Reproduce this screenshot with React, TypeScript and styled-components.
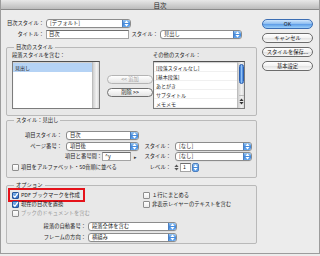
import styled, { createGlobalStyle } from 'styled-components'

const GlobalStyle = createGlobalStyle`
  html, body { margin: 0; padding: 0; background: #ececec; }
  body {
    font-family: "Noto Sans CJK JP", "Noto Sans", sans-serif;
    font-size: 5.3px;
    color: #1c1c1c;
  }
  * { box-sizing: border-box; }
`

const Arrows = ({ color = '#fff' }: { color?: string }) => (
    <svg width="5" height="7" viewBox="0 0 5 7">
        <polygon points="2.5,0.4 4.6,2.9 0.4,2.9" fill={color} />
        <polygon points="0.4,4.1 4.6,4.1 2.5,6.6" fill={color} />
    </svg>
)

const CheckMark = () => (
    <svg width="7" height="7" viewBox="0 0 7 7">
        <path d="M1.3 3.6 L2.9 5.3 L5.9 1.2" stroke="#fff" strokeWidth="1.3" fill="none" />
    </svg>
)

const Popup = ({ value, width }: { value: string; width: number }) => (
    <Select $w={width}>
        <SelectText>{value}</SelectText>
        <ArrowBox>
            <Arrows />
        </ArrowBox>
    </Select>
)

const Check = ({ label, on, disabled }: { label: string; on?: boolean; disabled?: boolean }) => (
    <CheckRow $disabled={disabled}>
        <Box $on={on}>{on && <CheckMark />}</Box>
        <span>{label}</span>
    </CheckRow>
)

const otherStyles = ['[段落スタイルなし]', '[基本段落]', 'あとがき', 'サブタイトル', 'メモメモ']

const App = () => {
    return (
        <>
            <GlobalStyle />
            <Dialog>
                <TitleBar>目次</TitleBar>
                <Body>
                    <LeftCol>
                        <Row $mb={2}>
                            <Label $w={39}>目次スタイル：</Label>
                            <Popup value="[デフォルト]" width={85} />
                        </Row>
                        <Row>
                            <Label $w={39}>タイトル：</Label>
                            <Field $w={83}>目次</Field>
                            <Label $w={30}>スタイル：</Label>
                            <Popup value="見出し" width={82} />
                        </Row>

                        <Group $mt={5} $pb={6}>
                            <Legend>目次のスタイル</Legend>
                            <StyleColumns>
                                <ListCol $w={88}>
                                    <SmallLabel>段落スタイルを含む：</SmallLabel>
                                    <List>
                                        <Items>
                                            <Item $selected>見出し</Item>
                                        </Items>
                                        <Track />
                                    </List>
                                </ListCol>
                                <MoveButtons>
                                    <Pill $disabled>&lt;&lt; 追加</Pill>
                                    <Pill>削除 &gt;&gt;</Pill>
                                </MoveButtons>
                                <ListCol $w={92}>
                                    <SmallLabel>その他のスタイル：</SmallLabel>
                                    <List>
                                        <Items>
                                            {otherStyles.map((s) => (
                                                <Item key={s}>{s}</Item>
                                            ))}
                                        </Items>
                                        <Track>
                                            <Thumb />
                                            <TrackArrows>
                                                <Arrows color="#333" />
                                            </TrackArrows>
                                        </Track>
                                    </List>
                                </ListCol>
                            </StyleColumns>
                        </Group>

                        <Group $mt={1} $pb={5}>
                            <Legend>スタイル：見出し</Legend>
                            <EntryGrid>
                                <Label>項目スタイル：</Label>
                                <Popup value="目次" width={73} />
                                <span />
                                <span />

                                <Label>ページ番号：</Label>
                                <Popup value="項目後" width={73} />
                                <Label>スタイル：</Label>
                                <Popup value="[なし]" width={77} />

                                <span />
                                <Inline>
                                    <Label $w={36} $left>項目と番号間：</Label>
                                    <Field $w={29}>^y</Field>
                                    <Caret>▸</Caret>
                                </Inline>
                                <Label>スタイル：</Label>
                                <Popup value="[なし]" width={77} />

                                <Span2>
                                    <Check label="項目をアルファベット・50音順に並べる" />
                                </Span2>
                                <Label>レベル：</Label>
                                <Inline>
                                    <Stepper>
                                        <Arrows color="#555" />
                                    </Stepper>
                                    <Field $w={11}>1</Field>
                                    <ArrowBox $solo>
                                        <Arrows />
                                    </ArrowBox>
                                </Inline>
                            </EntryGrid>
                        </Group>

                        <Group $mt={4} $pb={1}>
                            <Legend>オプション</Legend>
                            <OptionGrid>
                                <Marked>
                                    <Check label="PDF ブックマークを作成" on />
                                </Marked>
                                <Check label="１行にまとめる" />
                                <Check label="現在の目次を置換" on />
                                <Check label="非表示レイヤーのテキストを含む" />
                                <Check label="ブックのドキュメントを含む" disabled />
                            </OptionGrid>
                            <Row $mt={4}>
                                <Label $w={75}>段落の自動番号：</Label>
                                <Popup value="段落全体を含む" width={89} />
                            </Row>
                            <Row $mt={2}>
                                <Label $w={75}>フレームの方向：</Label>
                                <Popup value="横組み" width={89} />
                            </Row>
                        </Group>
                    </LeftCol>

                    <ButtonCol>
                        <Button $primary>OK</Button>
                        <Button>キャンセル</Button>
                        <Button>スタイルを保存...</Button>
                        <Button>基本設定</Button>
                    </ButtonCol>
                </Body>
            </Dialog>
        </>
    )
}

export default App

const Dialog = styled.div`
    width: 320px;
    height: 254px;
    background: #ececec;
    border: 1px solid #9c9c9c;
    border-top: none;
    overflow: hidden;
`
const TitleBar = styled.div`
    height: 10px;
    display: flex;
    align-items: center;
    justify-content: center;
    font-size: 6.5px;
    background: linear-gradient(#e8e8e8, #bcbcbc);
    border-bottom: 1px solid #8a8a8a;
`
const Body = styled.div`
    display: flex;
    gap: 5px;
    padding: 9px 0 0 5px;
`
const LeftCol = styled.div`
    width: 251px;
    display: flex;
    flex-direction: column;
`
const Row = styled.div<{ $mb?: number; $mt?: number }>`
    display: flex;
    align-items: center;
    height: 9px;
    margin-bottom: ${(p) => p.$mb ?? 0}px;
    margin-top: ${(p) => p.$mt ?? 0}px;
`
const Label = styled.span<{ $w?: number; $left?: boolean }>`
    ${(p) => (p.$w ? `width: ${p.$w}px; flex: none;` : '')}
    text-align: ${(p) => (p.$left ? 'left' : 'right')};
    white-space: nowrap;
    line-height: 9px;
    padding-right: 1px;
`
const SmallLabel = styled.div`
    line-height: 7px;
    margin-top: 1px;
    white-space: nowrap;
`
const Select = styled.div<{ $w: number }>`
    width: ${(p) => p.$w}px;
    height: 9px;
    flex: none;
    display: flex;
    align-items: stretch;
    margin-left: 1px;
    background: #fff;
    border: 1px solid #8c8c8c;
    border-radius: 3px;
    box-shadow: 0 0.5px 0 #d4d4d4;
    overflow: hidden;
`
const SelectText = styled.span`
    flex: 1;
    padding-left: 3px;
    line-height: 7px;
    white-space: nowrap;
`
const ArrowBox = styled.span<{ $solo?: boolean }>`
    width: ${(p) => (p.$solo ? 7 : 8)}px;
    height: ${(p) => (p.$solo ? '9px' : 'auto')};
    display: flex;
    align-items: center;
    justify-content: center;
    background: linear-gradient(#9cc8f2, #3d86dc 55%, #6aaaf0);
    border-left: 1px solid #4d7fbf;
    ${(p) => (p.$solo ? 'border: 1px solid #4d7fbf; border-radius: 2px; margin-left: 1px;' : '')}
`
const Field = styled.div<{ $w: number }>`
    width: ${(p) => p.$w}px;
    height: 9px;
    flex: none;
    margin-left: 1px;
    padding-left: 2px;
    line-height: 7px;
    background: #fff;
    border: 1px solid #a4a4a4;
    border-top-color: #6e6e6e;
`
const Group = styled.fieldset<{ $mt: number; $pb: number }>`
    margin: ${(p) => p.$mt}px 0 0 0;
    padding: 0 5px ${(p) => p.$pb}px;
    min-width: 0;
    border: 1px solid #b9b9b9;
    border-radius: 2px;
    background: #e8e8e8;
`
const Legend = styled.legend`
    padding: 0 2px;
    margin-left: 2px;
    line-height: 7px;
`
const StyleColumns = styled.div`
    display: flex;
    align-items: flex-start;
`
const ListCol = styled.div<{ $w: number }>`
    width: ${(p) => p.$w}px;
    display: flex;
    flex-direction: column;
    gap: 2px;
    & + & {
        margin-left: 5px;
    }
`
const List = styled.div`
    height: 48px;
    display: flex;
    background: #fff;
    border: 1px solid #7c7c7c;
    border-top-color: #505050;
    box-shadow: inset 0 1px 1px rgba(0, 0, 0, 0.2);
`
const Items = styled.div`
    flex: 1;
    display: flex;
    flex-direction: column;
    padding-top: 1px;
`
const Item = styled.div<{ $selected?: boolean }>`
    height: 9px;
    line-height: 9px;
    padding-left: 2px;
    font-size: 5px;
    white-space: nowrap;
    background: ${(p) => (p.$selected ? '#b5d3f5' : 'transparent')};
    border-bottom: 1px solid ${(p) => (p.$selected ? '#b5d3f5' : '#f0f0f0')};
`
const Track = styled.div`
    width: 7px;
    display: flex;
    flex-direction: column;
    align-items: center;
    padding: 2px 0 1px;
    background: linear-gradient(90deg, #cfcfcf, #f2f2f2 60%, #d8d8d8);
    border-left: 1px solid #bdbdbd;
`
const Thumb = styled.div`
    width: 5px;
    height: 20px;
    border-radius: 3px;
    background: linear-gradient(90deg, #2f6fce, #8fc1f4 50%, #3a7ad6);
    border: 1px solid #2a5fb0;
`
const TrackArrows = styled.div`
    margin-top: auto;
    height: 12px;
    display: flex;
    align-items: center;
    border-top: 1px solid #bbb;
`
const MoveButtons = styled.div`
    width: 46px;
    margin-left: 7px;
    padding-top: 24px;
    display: flex;
    flex-direction: column;
    gap: 4px;
`
const Pill = styled.div<{ $disabled?: boolean }>`
    height: 9px;
    border-radius: 5px;
    border: 1px solid ${(p) => (p.$disabled ? '#b4b4b4' : '#707070')};
    background: linear-gradient(#ffffff, #e4e4e4);
    color: ${(p) => (p.$disabled ? '#a4a4a4' : '#1c1c1c')};
    text-align: center;
    line-height: 7px;
`
const EntryGrid = styled.div`
    margin-top: 7px;
    display: grid;
    grid-template-columns: 51px 73px 32px 77px;
    grid-auto-rows: 9px;
    column-gap: 2px;
    row-gap: 1.5px;
    align-items: center;
`
const Inline = styled.div`
    display: flex;
    align-items: center;
`
const Caret = styled.span`
    margin-left: 3px;
    font-size: 5px;
    color: #333;
`
const Stepper = styled.span`
    width: 5px;
    height: 9px;
    display: flex;
    align-items: center;
`
const Span2 = styled.div`
    grid-column: 1 / 3;
`
const CheckRow = styled.div<{ $disabled?: boolean }>`
    display: flex;
    align-items: center;
    gap: 2px;
    height: 9px;
    white-space: nowrap;
    color: ${(p) => (p.$disabled ? '#9a9a9a' : '#1c1c1c')};
`
const Box = styled.span<{ $on?: boolean }>`
    width: 7px;
    height: 7px;
    flex: none;
    display: flex;
    border-radius: 1px;
    border: 1px solid ${(p) => (p.$on ? '#28569a' : '#8e8e8e')};
    background: ${(p) => (p.$on ? 'linear-gradient(#7fb4ee, #2f6fc8)' : 'linear-gradient(#ffffff, #ececec)')};
    align-items: center;
    justify-content: center;
    svg {
        margin: -1px;
    }
`
const OptionGrid = styled.div`
    margin-top: 2px;
    display: grid;
    grid-template-columns: 131px 1fr;
    grid-auto-rows: 9px;
`
const Marked = styled.div`
    justify-self: start;
    outline: 2px solid #e5121a;
    outline-offset: 0;
    margin: -1px 0 0 -2px;
    padding: 1px 3px 0 2px;
    height: 10px;
`
const ButtonCol = styled.div`
    width: 51px;
    display: flex;
    flex-direction: column;
    gap: 4px;
`
const Button = styled.div<{ $primary?: boolean }>`
    height: 10px;
    border-radius: 5px;
    text-align: center;
    line-height: 8px;
    white-space: nowrap;
    border: 1px solid ${(p) => (p.$primary ? '#3c6eb3' : '#6c6c6c')};
    background: ${(p) =>
        p.$primary
            ? 'linear-gradient(#cfe5fb, #8bbcf0 50%, #5a9ae6 51%, #9cd0fa)'
            : 'linear-gradient(#ffffff, #f2f2f2 50%, #e2e2e2 51%, #f8f8f8)'};
`
